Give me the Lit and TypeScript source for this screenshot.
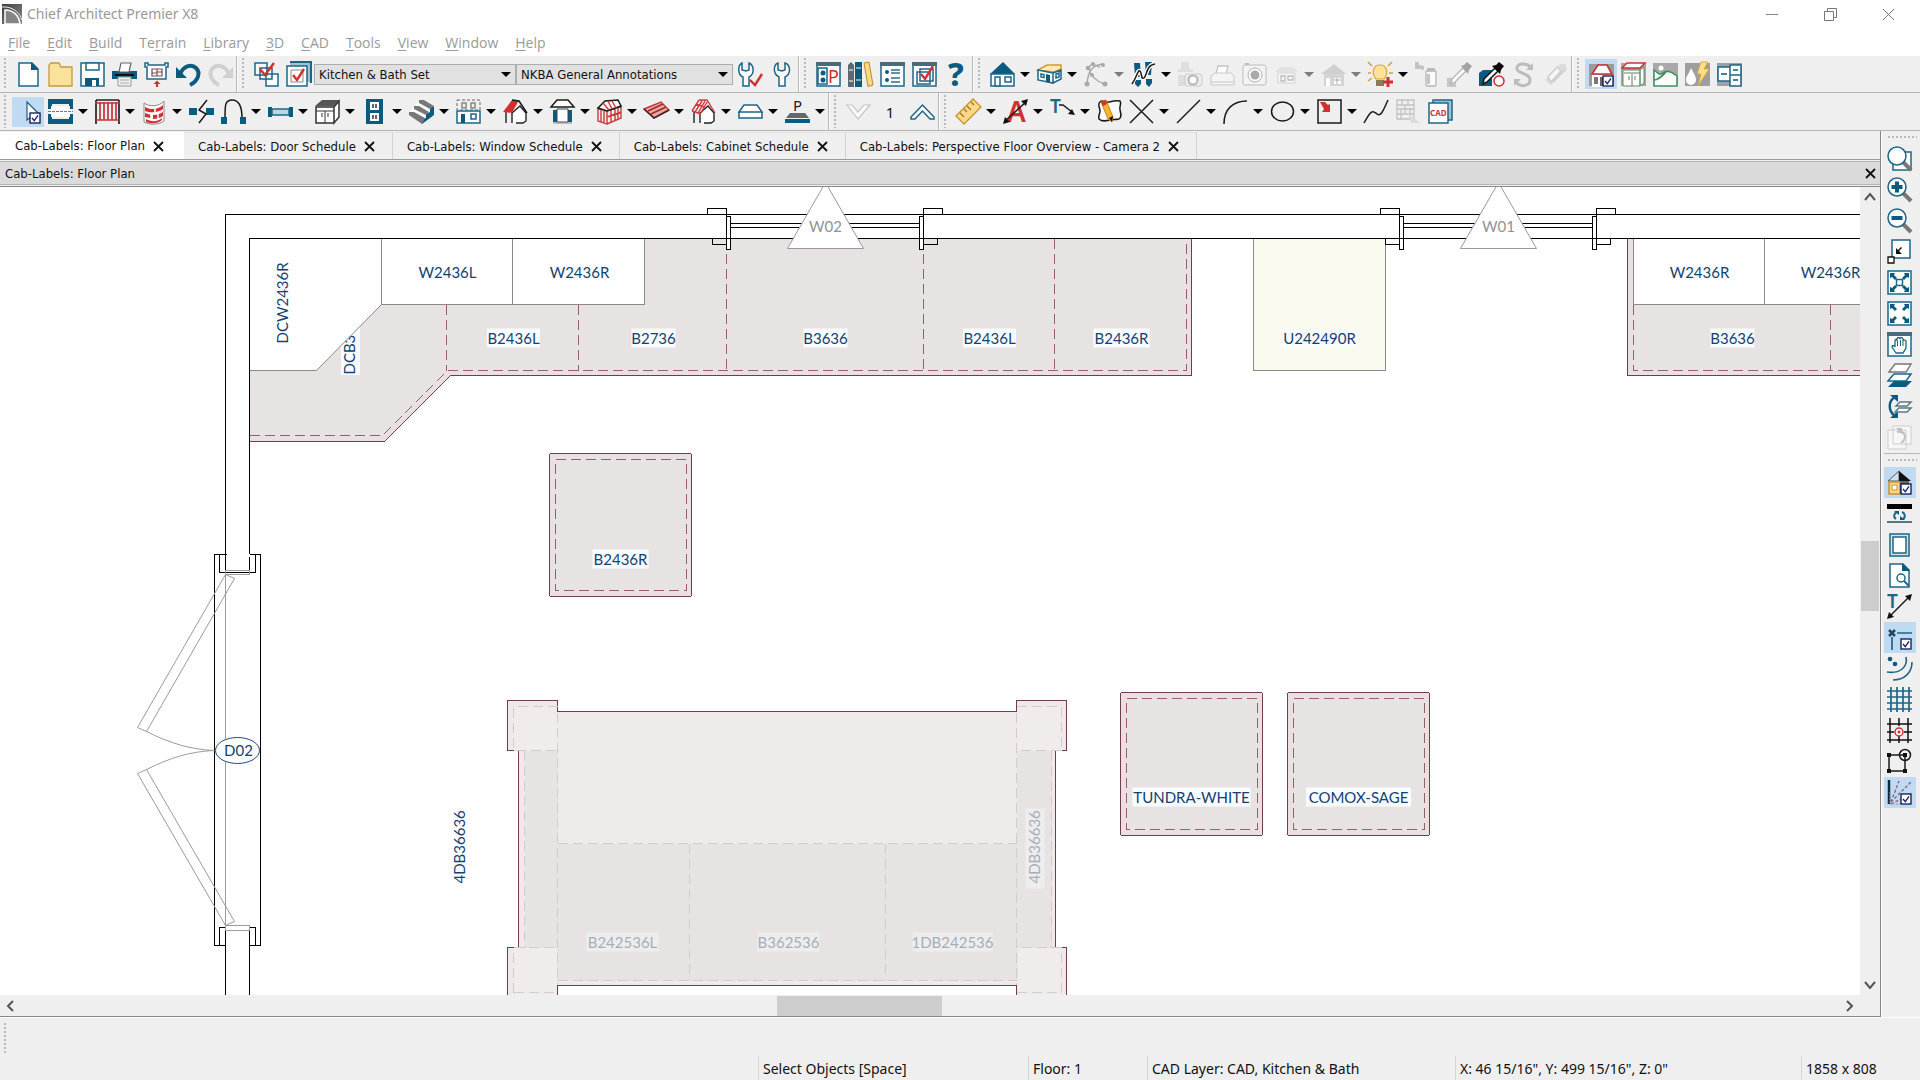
import { LitElement, html, svg, css, nothing, type TemplateResult, type SVGTemplateResult } from "lit";
import { customElement, state } from "lit/decorators.js";
import { classMap } from "lit/directives/class-map.js";

/* ---------- icon artwork, each on a 25 x 25 grid ---------- */

const tick = svg`<rect x="14" y="14" width="10" height="10" fill="#fff" stroke="#0a1450" stroke-width="1.3"/>
  <path d="M16 19l2.300 2.700L22 16.300" fill="none" stroke="#14206e" stroke-width="1.300"/>`;

const palette = svg`<rect x="1" y="1" width="23" height="23" fill="#fff" stroke="#1d6688" stroke-width="1.500"/>
  <rect x="0" y="0" width="25" height="4" fill="#4a6b7b"/>`;

const ICONS: Record<string, SVGTemplateResult> = {
  newFile: svg`<path class="to" d="M3 1h13l6 6v17H3z"/><path class="t" d="M15 0l8 8h-8z"/>`,
  open: svg`<path d="M1 24V3l2-2h8l2 4h11v19z" fill="#fbe29a" stroke="#c49a3c" stroke-width="1.300"/>`,
  save: svg`<path class="to" d="M1 1h23v23H1z"/><path class="to" d="M6 1h13v7H6z"/><path class="t" d="M5 16h14v8H5z"/><path d="M12 18h4v6h-4z" fill="#fff"/>`,
  print: svg`<path class="t" d="M0 9h25v8H0z"/><path d="M7 10L9 1h10l-2 9z" fill="#fff" stroke="#666" stroke-width="1.200"/><path d="M3 13h19" stroke="#111" stroke-width="2"/><path d="M6 15h13v9H6z" fill="#eee" stroke="#999"/><path d="M8 18h9M8 21h9" stroke="#aaa"/>`,
  layout: svg`<path class="to" d="M1 1h3v2h17V1h3v4h-2v12H3V5H1z"/><path d="M8 7h10v7H8zM8 11h5M13 7v7M13 10h5" fill="none" stroke="#7a4a50" stroke-width="1.200"/><path class="rf" d="M9.500 22L13 18.500l3.500 3.500H14v3h-2v-3z"/>`,
  undo: svg`<path d="M4 12C8 3 16 2 20 6c5 5 2 13-6 17" fill="none" stroke="#0b5a80" stroke-width="4"/><path class="t" d="M0 5v11h11z"/>`,
  redo: svg`<path d="M21 12C17 3 9 2 5 6c-5 5-2 13 6 17" fill="none" stroke="#d0d0d0" stroke-width="4"/><path d="M25 5v11H14z" fill="#d0d0d0"/>`,
  activeDefaults: svg`<path class="to" d="M1 1h12v12H1zM12 12h12v12H12zM6 6h12v11H6z"/><path class="rl3" d="M6 7l5 6L20 1"/>`,
  displaySets: svg`<path d="M4 0h21v21" fill="none" stroke="#1d6688" stroke-width="2"/><path d="M4 1h20v19H4z" fill="#9cc4d4"/><path class="to" d="M1 4h20v20H1z"/><path d="M5 8h12v12H5z" fill="#fff" stroke="#888"/><path class="rl3" d="M7 13l4 5 7-11"/>`,
  wrenchTick: svg`<path class="to" d="M5 24V15C-1 12 0 3 4 1v7l4 1 3-1V1c5 2 6 11 0 14v9z"/><path class="rl3" d="M12 18l5 5 7-11"/>`,
  wrench: svg`<path class="to" d="M9 24V15C3 12 3 3 8 1v7l4 1 3-1V1c6 2 6 11 0 14v9z"/>`,
  project: svg`${palette}<rect class="to" x="2" y="6" width="9" height="16"/><circle class="t" cx="7" cy="11" r="2.500"/><circle class="t" cx="7" cy="18" r="2.500"/><text x="12" y="21" font-size="18" fill="#d32f2f">P</text>`,
  library: svg`<path d="M0 3l3-3 3 3v22H0z" fill="#5f6a70"/><path class="t" d="M7 0h7v25H7z"/><path d="M1 8h4M1 19h4M8 6h5M8 18h5" stroke="#fff"/><path d="M16 1l5-1 4 23-5 1.500z" fill="#f7d98c" stroke="#c08a20"/>`,
  objectList: svg`${palette}<circle class="t" cx="7" cy="10" r="2"/><circle class="t" cx="7" cy="18" r="2"/><path d="M11 8h9M11 11h9M11 16h9M11 20h9" stroke="#2a7090" stroke-width="1.300"/>`,
  planCheck: svg`${palette}<path class="to" d="M8 7h13v12H8zM5 10h13v12H5z"/><path class="rl3" d="M9 12l4 5 8-13"/>`,
  help: svg`<text x="4" y="24" font-size="32" font-weight="800" fill="#0b5a80">?</text>`,
  camera: svg`<path class="t" d="M0 12L13 0l12 12z"/><path class="to" d="M1 12h23v12H1z"/><path class="to" d="M5 15h5v9H5zM15 15h6v5h-6z"/>`,
  dollhouse: svg`<path d="M1 8l9-5h14v4l-7 3z" fill="#fbe9c0" stroke="#d79a2a" stroke-width="1.500"/><path class="to" d="M1 8l15 3v10L1 18zM16 11l8-3v9l-8 4z"/><path class="to" d="M4 12l3 .6v3L4 15zM19 12l3-1v4l-3 1z"/><path class="t" d="M9 12l4 1v8l-4-1z"/>`,
  walk: svg`<path class="gl" d="M5 6C6 12 10 18 20 22M19 2C9 3 4 8 3 22M3 7l5-5 8 3"/><circle cx="4" cy="6" r="2.300" fill="#a8a8a8"/><circle cx="9" cy="2" r="2" fill="#a8a8a8"/><circle cx="19" cy="3" r="2" fill="#a8a8a8"/><circle cx="8" cy="13" r="2" fill="#a8a8a8"/><circle cx="3" cy="22" r="2.500" fill="#a8a8a8"/><circle cx="21" cy="22" r="2.500" fill="#a8a8a8"/>`,
  footsteps: svg`<path class="t" d="M3 1h6l1 14H4zM4 18h6v4l-3 3-3-3zM14 0h7l-1 13h-5zM15 17h6v4l-3 4-3-3z"/><path d="M1 21C6 14 7 7 9 9s1 9 4 7 2-13 11-14" fill="none" stroke="#fff" stroke-width="4"/><path class="k" d="M1 22C6 15 7 7 9 9s1 9 4 7 2-13 11-14"/>`,
  person: svg`<path d="M3 0h8v7h4v3H0V7h3zM0 13h9v11H0z" fill="#dedede"/><rect x="7" y="12" width="17" height="12" rx="2" fill="#ececec" stroke="#ccc"/><circle cx="15" cy="18" r="4.500" fill="#fff" stroke="#b5b5b5" stroke-width="2"/>`,
  printGrey: svg`<path d="M6 12l2-8h10l-2 8" fill="#fff" stroke="#c5c5c5" stroke-width="1.300"/><path d="M1 14l4-3h16l3 3v9H1z" fill="#f4f4f4" stroke="#c8c8c8"/><path d="M1 20h23" stroke="#c8c8c8"/>`,
  photo: svg`<rect x="1" y="3" width="23" height="20" rx="2" fill="#f3f3f3" stroke="#bdbdbd"/><circle cx="13" cy="13" r="7" fill="#fff" stroke="#b0b0b0"/><circle cx="13" cy="13" r="4.500" fill="#a9a9a9"/><path d="M3 3V1h4v2" fill="#bdbdbd"/>`,
  elevGrey: svg`<path d="M1 10l5-5h13l5 5z" fill="#e2e2e2"/><path d="M4 11h17v10H4z" fill="#f6f6f6" stroke="#d0d0d0"/><path d="M7 14h4v5H7zM14 14h5v4h-5z" fill="none" stroke="#bcbcbc" stroke-width="1.300"/>`,
  homeGrey: svg`<path d="M0 12L13 2l12 10z" fill="#cfcfcf"/><path d="M3 12h20v12H3z" fill="#d4d4d4"/><path d="M5 16h4v8H5zM13 16h7v6h-7z" fill="#fff"/><path d="M13 18h7M16 16v6" stroke="#aaa"/>`,
  light: svg`<path d="M8 17C3 11 5 3 12 3s9 8 4 14z" fill="#fbe39c" stroke="#d9a43c" stroke-width="1.200"/><path d="M8 18h8v6H8z" fill="#8d7a5a"/><path d="M0 0l4 4M24 0l-4 4M0 11h3M21 11h4M0 19l4-3" stroke="#d99a3c" stroke-width="1.500"/><path d="M20 15v10M15 20h10" stroke="#d32f2f" stroke-width="3"/>`,
  spray: svg`<path d="M0 2l9 2v4L0 6zM0 0h4v7H0z" fill="#c4c4c4"/><path d="M12 6h8v4h-8z" fill="#bbb"/><rect x="11" y="9" width="10" height="15" rx="1" fill="#fafafa" stroke="#b5b5b5" stroke-width="1.300"/><path d="M12 12h3v10h-3z" fill="#c5c5c5"/>`,
  dropper: svg`<path d="M0 16h9v9H0z" fill="#c6c6c6"/><path d="M4 22l1-5L16 6l3 3L8 20z" fill="#fff" stroke="#b3b3b3" stroke-width="1.300"/><path d="M14 4l3-1 3-3 5 4-3 4-1 4z" fill="#a3a3a3"/>`,
  dropperMaterial: svg`<path class="t" d="M0 11l4-3h9v16H0z"/><circle cx="20" cy="19" r="5" fill="#fff" stroke="#d32f2f" stroke-width="1.500"/><path d="M4 22l1-5L16 6l3 3L8 20z" fill="#fff" stroke="#111" stroke-width="1.500"/><path d="M13 4l4-1 3-3 5 4-3 4-1 4z" fill="#0a0a0a"/>`,
  swap: svg`<path d="M20 6C16 0 5 1 6 7c1 5 13 4 13 11 0 6-10 8-14 2" fill="none" stroke="#bcbcbc" stroke-width="3"/><path d="M22 1v7h-7zM3 24v-7h7z" fill="#bcbcbc"/>`,
  pads: svg`<path d="M2 18L17 2h6v5L8 23z" fill="#dcdcdc"/><path d="M5 15l9-10 4 4L8 20zM10 20L23 7" fill="#f6f6f6" stroke="#cecece" stroke-width="1.500"/>`,
  houseOn: svg`<path d="M0 2h25v22H0z" fill="#9b9b9b"/><path d="M3 12L9 3h9l5 9z" fill="#fff" stroke="#c5343a" stroke-width="1.700"/><path d="M3 13h20v12H3z" fill="#fff"/><path d="M5 15h4v7H5z" fill="#777"/><path d="M11 15h4v9h-4z" fill="#666"/>${tick}`,
  cabinetRed: svg`<path d="M0 1h25v23H0z" fill="#a5a5a5"/><path d="M1 6l5-5h18l-5 5z" fill="#fff" stroke="#c5343a" stroke-width="1.500"/><path d="M2 8h17v16H2zM19 8l4-3v16l-4 3z" fill="#fff" stroke="#5d8f6a"/><path d="M11 12v12M3 11h16M8 14v4M14 14v4" stroke="#5d7a6a"/>`,
  terrain: svg`<path d="M0 1h25v23H0z" fill="#a9a9a9"/><circle cx="8" cy="6" r="2.500" fill="#fff"/><path d="M1 24V8l5 4 3 0c4-5 10-2 15 2v10zM1 18c6 0 10-6 13-9" fill="#fff" stroke="#3f9160" stroke-width="1.500"/>`,
  weather: svg`<path d="M0 1h25v23H0z" fill="#9e9e9e"/><path d="M6 6c3 6 5 8 5 12a5 5 0 0 1-10 0c0-4 3-6 5-12z" fill="#fff"/><path d="M16 0h7l-4 7h5L13 24l3-12h-4z" fill="#fbe08c" stroke="#dfa93a"/>`,
  schedule: svg`<path d="M0 1h25v23H0z" fill="#9aa3a8"/><path class="to" d="M1 5h12v14H1zM13 3h11v10H13zM13 13h11v11H13z"/><path d="M4 12h6M16 8h5M16 18h5" stroke="#0b5a80" stroke-width="1.700"/>`,

  select: svg`<path d="M11 3v18l5-4 4 0 4-1z" fill="#fff" stroke="#1d5a80" stroke-width="1.200"/>${tick}`,
  wall: svg`<path class="t" d="M0 0h25v9h-4V5H4v4H0zM0 16h4v4h17v-4h4v9H0z"/><path d="M2 7h21v11H2z" fill="#fff"/><path class="t" d="M0 0h3v10H0zM22 0h3v10h-3zM0 15h3v10H0zM22 15h3v10h-3z"/><path d="M0 12.500h25" stroke="#777" stroke-dasharray="3 1"/>`,
  railing: svg`<path d="M1 1v24M24 1v24M1 1h23" stroke="#222" stroke-width="1.700"/><path d="M0 4h25M1 21h24M5 3v18M9 3v18M13 3v18M17 3v18M21 3v18" stroke="#c5343a" stroke-width="1.700"/>`,
  curvedWall: svg`<path d="M2 4c5 4 15 4 20-2v20c-5 4-15 4-20 1z" fill="#fff" stroke="#888"/><path class="rf" d="M3 8c5 3 13 3 18-2v4c-5 4-13 4-18 2zM3 14l6 2v3l-6-1zM11 16c4 0 7-1 10-3v4c-3 2-6 3-10 3zM4 20c5 3 12 3 16-1v2c-4 4-11 4-16 2z"/><path d="M13 8v5M9 15v5M16 14v6" stroke="#fff" stroke-width="1.500"/>`,
  breakWall: svg`<path class="t" d="M0 9h8v7H0zM17 9h8v7h-8z"/><path class="k" d="M18 1l-8 10 7 4-7 9"/>`,
  spline: svg`<path class="k" d="M4 19C4 6 4 1 11 1s10 6 10 18"/><path class="t" d="M0 18h6v7H0zM19 18h6v7h-6z"/>`,
  windowTool: svg`<path class="t" d="M0 8h4v10H0zM21 8h4v10h-4z"/><path d="M4 10h17v6H4z" fill="#bcd6e0" stroke="#1d6688" stroke-width="1.500"/>`,
  cabinet: svg`<path d="M0 7l7-6h18l-6 6z" fill="#555"/><path d="M1 8h18v16H1zM19 8l5-6v16l-5 6z" fill="#fff" stroke="#333" stroke-width="1.500"/><path d="M10 12v12M1 12h18M7 14v4M13 14v4" stroke="#333"/>`,
  outlet: svg`<rect class="t" x="4" y="0" width="17" height="25"/><path d="M8 3h9v8H8zM8 14h9v8H8z" fill="#fff"/><path d="M11 5v4M14 5v4M11 16v4M14 16v4" stroke="#333" stroke-width="1.500"/>`,
  stairs: svg`<path d="M11 1h5l9 6-12 17L0 14z" fill="#fff"/><path class="t" d="M13 25v-5l4-1v-4l4-2V9l4-2v9z"/><path d="M10 1h5l10 6-4 3L10 4zM5 7h5l10 6-3 3L5 10zM0 13h5l11 6-3 6L0 16z" fill="#777"/>`,
  elevation: svg`<path d="M1 1h23v10H1z" fill="none" stroke="#666" stroke-dasharray="3 2"/><path d="M6 4h4v5H6zM15 4h4v5h-4z" fill="none" stroke="#888" stroke-width="1.500"/><path class="to" d="M1 12h23v12H1z"/><path class="t" d="M5 15h4v9H5z"/><path class="to" d="M15 15h5v5h-5z"/>`,
  roofRed: svg`<path d="M3 12v12M9 24V14l8-7 6 7v8l-3 2h-7" fill="#fff" stroke="#222" stroke-width="1.400"/><path class="rf" d="M0 13L9 1h7L9 14z"/><path d="M9 1l7 1 8 12" class="k"/>`,
  gazebo: svg`<path class="kw" d="M1 8l6-7h11l6 7z"/><path class="t" d="M3 11h4v12H3zM18 11h4v12h-4z"/><path d="M7 10h11v13H7z" fill="#fff" stroke="#444"/><path d="M3 24h19" stroke="#888"/>`,
  framing: svg`<path class="rl" d="M1 9v13l9 3V12zM10 12l14-5v12l-14 6M4 11v12M7 12v12M14 11v12M18 9v12M21 8v12M10 18l14-5"/><path class="kw" d="M1 9L8 2l13-1 3 6-14 5z"/><path class="rl" d="M6 4l6 7M11 2l4 8M15 2l4 7"/>`,
  deck: svg`<path d="M0 10L17 3l8 8-15 8z" fill="#e9a9a6" stroke="#c5343a" stroke-width="1.400"/><path d="M4 12l15-7M7 15l15-7" stroke="#a02828" stroke-width="1.400"/><path d="M0 10l10 9 15-8" fill="none" stroke="#422" stroke-width="1.600"/>`,
  rafters: svg`<path d="M3 12v12M9 24V14l8-7 6 7v8l-3 2h-7" fill="#fff" stroke="#222" stroke-width="1.400"/><path class="rl" d="M1 12L8 1M4 13l7-11M7 14l7-12M10 14l6-11M1 12l9 3M5 5l8 3M8 1h8l8 13"/>`,
  slab: svg`<path class="to" d="M1 13L6 6h13l5 7zM1 13h23v6H1z"/>`,
  pad: svg`<text x="8" y="12" font-size="15" fill="#222">P</text><path d="M5 14h15l4 5H1z" fill="#666"/><path class="t" d="M0 20h25v4H0z"/>`,
  down: svg`<path d="M1 6h5l6 7 6-7h6L12 20z" fill="#fbfbfb" stroke="#c6c6c6" stroke-width="1.200"/>`,
  up: svg`<path class="to" d="M1 18L12.500 6 24 18v2h-4l-7.500-8L5 20H1z"/>`,
  measure: svg`<path d="M0 17L17 0l8 8L8 25z" fill="#fbd98a" stroke="#c8922c" stroke-width="1.300"/><path d="M4 14l4 4M8 10l3 3M11 7l4 4M15 3l3 3" stroke="#a8741c" stroke-width="1.300"/>`,
  textTool: svg`<text x="4" y="23" font-size="28" font-weight="600" fill="#d32f2f">A</text><path class="k" d="M2 22L23 3"/><path d="M25 0l-2 7-5-5zM0 25l2-7 5 5z" fill="#111"/>`,
  leader: svg`<text x="0" y="14" font-size="19" font-weight="600" fill="#1d6688">T</text><path class="k" d="M9 6h4l9 7"/><path d="M25 16l-7-1 4-5z" fill="#111"/>`,
  revision: svg`<path class="kw" d="M3 3c3-3 5 1 9 0s8-2 11-1c2 3-1 5 0 9s2 7-1 9c-5 1-5 0-9 1s-8 2-11-1c-1-4 1-5 1-8S0 5 3 3z"/><path d="M4 3l5-2 7 17-1 5-4-3z" fill="#f4b52f" stroke="#c9861d"/><path class="rf" d="M4 3l5-2 1 4-4 2z"/><path d="M12 19l4-2-1 6z" fill="#111"/>`,
  cross: svg`<path class="k" d="M1 1l23 23M24 1L1 24"/>`,
  line: svg`<path class="k" d="M24 1L1 24"/>`,
  arc: svg`<path class="k" d="M1 25C1 10 10 2 24 2"/>`,
  circle: svg`<ellipse class="k" cx="12.500" cy="12.500" rx="11" ry="9.500"/>`,
  box: svg`<path class="k" d="M1 1h23v23H1z"/><path class="rf" d="M3 3h5l3 3 2-1v8H5l2-3z"/>`,
  curve: svg`<path class="k" d="M0 24C8 9 9 12 13 15s6-3 11-14"/>`,
  wallGrey: svg`<path d="M1 1h17v19H1zM1 6h17M1 10h17M1 15h17M6 1v5M12 1v5M9 6v9M5 10v10M14 10v10" fill="none" stroke="#c2c2c2" stroke-width="1.300"/><path d="M12 14l12 10h-9z" fill="#dcdcdc"/>`,
  cad: svg`<path d="M5 1h19v20H5z" fill="#9cc4d4" stroke="#1d6688" stroke-width="1.500"/><rect class="to" x="1" y="4" width="19" height="20"/><text x="2" y="17" font-size="8" font-weight="700" fill="#d32f2f">CAD</text>`,

  zoomArea: svg`<path class="to" d="M6 6h18v18H6z"/><path d="M15 15l9 9" stroke="#777" stroke-width="4"/><circle class="to" cx="10" cy="10" r="9"/>`,
  zoomIn: svg`<path d="M15 15l9 9" stroke="#777" stroke-width="4"/><circle class="to" cx="10" cy="10" r="9"/><path d="M10 4.500v11M4.500 10h11" stroke="#0b5a80" stroke-width="4"/>`,
  zoomOut: svg`<path d="M15 15l9 9" stroke="#777" stroke-width="4"/><circle class="to" cx="10" cy="10" r="9"/><path d="M4.500 10h11" stroke="#0b5a80" stroke-width="4"/>`,
  undoZoom: svg`<path class="to" d="M5 1h18v18H5z"/><path d="M1 18h6v6H1z" fill="#fff" stroke="#111" stroke-width="1.300"/><path d="M9 15V9l2 2 3-3 1 1-3 3 3 3z" fill="#111"/>`,
  fillWindow: svg`<path class="to" d="M1 1h23v23H1zM9.500 9.500h6v6h-6z"/><path class="t" d="M3 3h5L7 5l3 3-2 2-3-3-2 1zM22 3h-5l1 2-3 3 2 2 3-3 2 1zM3 22h5l-1-2 3-3-2-2-3 3-2-1zM22 22h-5l1-2-3-3 2-2 3 3 2-1z"/>`,
  fillBuilding: svg`<path class="to" d="M1 1h23v23H1z"/><path class="t" d="M3 3h5L7 5l3 3-2 2-3-3-2 1zM22 3h-5l1 2-3 3 2 2 3-3 2 1zM3 22h5l-1-2 3-3-2-2-3 3-2-1zM22 22h-5l1-2-3-3 2-2 3 3 2-1z"/>`,
  pan: svg`${palette}<path d="M9 21l-4-6c0-2 2-2 3 0V9c0-2 2-2 2 0V7c0-2 2-2 3 0 0-2 2-2 3 0v2c0-2 2-1 3 0v7l-3 5z" fill="#fff" stroke="#1d6688" stroke-width="1.300"/><path d="M10.500 9v5M13.500 8v6M16 9v5" stroke="#1d6688"/>`,
  layers: svg`<path class="t" d="M1 24l6-6h18l-6 6z"/><path class="to" d="M1 18l6-7h17l-5 7z"/><path d="M2 9l6-8h16l-5 8z" fill="#fff" stroke="#777" stroke-width="1.400"/>`,
  layerRotate: svg`<path d="M8 3c-7 4-7 14 0 19" fill="none" stroke="#0b5a80" stroke-width="2.500"/><path class="t" d="M3 1h8v7zM3 24h8v-7z"/><path d="M9 12l4-4h11l-4 4zM8 18l4-4h12l-4 4z" fill="#fff" stroke="#5d7885" stroke-width="1.500"/>`,
  rotateGrey: svg`<path d="M1 5h18v19H1zM6 1h18v18H6z" fill="#f7f7f7" stroke="#cdcdcd"/><path d="M10 7c8-2 11 6 4 11" fill="none" stroke="#c4bfc6" stroke-width="2"/><path d="M9 3h6v6z" fill="#c4bfc6"/>`,
  houseColor: svg`<path d="M1 11L12 1v10z" fill="#cfe4ee" stroke="#555"/><path d="M12 1l12 10H12z" fill="#111"/><path d="M2 12h11v12H2z" fill="#fbd98a" stroke="#c8922c" stroke-width="1.500"/><path d="M5 15h5v5H5z" fill="#fff" stroke="#c8922c"/><path d="M13 11h9v13h-9z" fill="#666"/>${tick}`,
  weights: svg`<path d="M0 3h25v5H0z" fill="#000"/><path d="M0 21h25" stroke="#1d5060" stroke-width="1.500"/><path d="M9 18c-3-2-2-6 1-7M15 11c3 1 4 5 1 7" fill="none" stroke="#1d6688" stroke-width="2"/><path class="t" d="M7 10h5v4zM18 19h-5v-4z"/>`,
  sheet: svg`<path d="M3 2h19v22H3z" fill="#d4e4eb" stroke="#1d6688" stroke-width="1.500"/><path class="to" d="M6 5h13v16H6z"/>`,
  preview: svg`<path class="to" d="M3 1h13l6 6v17H3z"/><path class="t" d="M15 0l8 8h-8z"/><circle cx="14" cy="15" r="4" fill="#fff" stroke="#1d6688" stroke-width="1.500"/><path d="M17 18l5 5" stroke="#1d6688" stroke-width="2"/>`,
  dimension: svg`<text x="0" y="14" font-size="19" font-weight="600" fill="#1d6688">T</text><path class="k" d="M2 23L23 2"/><path d="M25 0l-2 7-5-5zM0 25l2-7 5 5z" fill="#111"/>`,
  snapLine: svg`<path d="M5 12v13M10 8h15" stroke="#1d6688" stroke-width="1.700"/><path d="M2 5l6 6M8 5l-6 6" stroke="#1d4a60" stroke-width="2.500"/>${tick}`,
  arcCentre: svg`<circle class="t" cx="3" cy="3" r="2.300"/><circle class="t" cx="8" cy="8" r="2.300"/><path d="M19 1C21 11 13 18 0 16M25 6c0 11-8 18-19 18" fill="none" stroke="#1d6688" stroke-width="1.600"/>`,
  grid: svg`<path d="M4 0v25M10 0v25M16 0v25M22 0v25M0 4h25M0 10h25M0 16h25M0 22h25" stroke="#1d6688" stroke-width="1.700"/>`,
  gridSnap: svg`<path d="M3 0v25M12 0v8M12 18v7M21 0v25M0 6h25M0 14h7M17 14h8M0 22h25" stroke="#111" stroke-width="1.500"/><circle cx="12" cy="14" r="4" fill="#fff" stroke="#d32f2f" stroke-width="1.500"/><circle class="rf" cx="12" cy="14" r="1.500"/>`,
  objectSnap: svg`<path class="k" d="M2 6h16v16H2z"/><path d="M0 4h4v4H0zM0 20h4v4H0zM16 20h4v4h-4zM16 4h4v4h-4z" fill="#111"/><circle class="k" cx="18" cy="6" r="5.500"/>`,
  angleSnap: svg`<path d="M2 0v24" stroke="#0a2a40" stroke-width="2.500"/><path d="M4 22L12 1M4 22L25 1M4 24l20-10" stroke="#8a5a78" stroke-width="1.300" stroke-dasharray="3 2"/><path d="M3 12v12h10" fill="none" stroke="#99a" stroke-dasharray="2 1"/>${tick}`,
};

interface Tool { icon: string; label: string; menu?: boolean; on?: boolean; off?: boolean; }
const t = (icon: string, label: string, flags = ""): Tool => ({
  icon, label, menu: flags.includes("m"), on: flags.includes("on"), off: flags.includes("x"),
});

const FILE_TOOLS = [t("newFile", "New Plan"), t("open", "Open Plan"), t("save", "Save"), t("print", "Print"),
  t("layout", "Send to Layout"), t("undo", "Undo"), t("redo", "Redo", "x")];
const SET_TOOLS = [t("activeDefaults", "Active Defaults"), t("displaySets", "Layer Display Options")];
const WRENCH_TOOLS = [t("wrenchTick", "Default Settings"), t("wrench", "Preferences")];
const BROWSER_TOOLS = [t("project", "Project Browser"), t("library", "Library Browser"), t("objectList", "Materials List"),
  t("planCheck", "Plan Check"), t("help", "Help")];
const VIEW_TOOLS = [t("camera", "Camera", "m"), t("dollhouse", "Overview", "m"), t("walk", "Walkthrough", "mx"),
  t("footsteps", "Walkthrough Path", "m"), t("person", "Record", "x"), t("printGrey", "Print Image", "x"),
  t("photo", "Picture", "x"), t("elevGrey", "Cross Section", "mx"), t("homeGrey", "Orthographic", "mx"),
  t("light", "Add Lights", "m"), t("spray", "Material Painter", "x"), t("dropper", "Eyedropper", "x"),
  t("dropperMaterial", "Object Painter"), t("swap", "Swap", "x"), t("pads", "Adjust Material", "x")];
const MODE_TOOLS = [t("houseOn", "House Tools", "on"), t("cabinetRed", "Cabinet Tools"), t("terrain", "Terrain Tools"),
  t("weather", "Electrical Tools"), t("schedule", "Schedule Tools")];
const BUILD_TOOLS = [t("select", "Select Objects", "on"), t("wall", "Walls", "m"), t("railing", "Railings", "m"),
  t("curvedWall", "Curved Walls", "m"), t("breakWall", "Break Wall"), t("spline", "Doors", "m"), t("windowTool", "Windows", "m"),
  t("cabinet", "Cabinets", "m"), t("outlet", "Electrical", "m"), t("stairs", "Stairs", "m"), t("elevation", "Floors", "m"),
  t("roofRed", "Roof", "m"), t("gazebo", "Rooms", "m"), t("framing", "Framing", "m"), t("deck", "Decks", "m"),
  t("rafters", "Rafters", "m"), t("slab", "Slabs", "m"), t("pad", "Terrain", "m")];
const CAD_TOOLS = [t("measure", "Dimensions", "m"), t("textTool", "Text", "m"), t("leader", "Leader Line", "m"),
  t("revision", "Revision Cloud"), t("cross", "Points", "m"), t("line", "Lines", "m"), t("arc", "Arcs", "m"),
  t("circle", "Circles", "m"), t("box", "Boxes", "m"), t("curve", "Spline"), t("wallGrey", "Edit Region", "x"),
  t("cad", "CAD Detail Management")];
const ZOOM_TOOLS = [t("zoomArea", "Zoom"), t("zoomIn", "Zoom In"), t("zoomOut", "Zoom Out"), t("undoZoom", "Undo Zoom"),
  t("fillWindow", "Fill Window"), t("fillBuilding", "Fill Window Building Only"), t("pan", "Pan Window"),
  t("layers", "Layer Set"), t("layerRotate", "Swap Layers"), t("rotateGrey", "Rotate View", "x")];
const TOGGLE_TOOLS = [t("houseColor", "Color", "on"), t("weights", "Line Weights"), t("sheet", "Drawing Sheet"),
  t("preview", "Print Preview"), t("dimension", "Temporary Dimensions"), t("snapLine", "Extension Snaps", "on"),
  t("arcCentre", "Arc Centers"), t("grid", "Reference Grid"), t("gridSnap", "Grid Snaps"), t("objectSnap", "Object Snaps"),
  t("angleSnap", "Angle Snaps", "on")];

const closeMark = svg`<path d="M1 1l9 9M10 1l-9 9" fill="none" stroke="#111" stroke-width="1.800"/>`;

/* ---------- the drawing ---------- */

@customElement("floor-plan")
export class FloorPlan extends LitElement {
  static styles = css`
    :host { display: block; background: #fff; }
    svg { display: block; width: 100%; height: 100%; }
    text { font: 15px Lato, "Open Sans", sans-serif; fill: #153f72; text-anchor: middle; }
    .start { text-anchor: start; }
    .wall, .gap { stroke: #000; fill: #fff; }
    .ink { stroke: #000; fill: none; }
    .thin { stroke: #8a8a8a; fill: #fff; }
    .leaf { stroke: #9c9c9c; fill: none; }
    .tag { stroke: #9a9a9a; fill: #fff; }
    .top { stroke: #6e3f4b; fill: #ecdfe1; }
    .body { fill: #e8e3e3; }
    .dash { stroke: #94606c; fill: none; stroke-dasharray: 10 5; }
    .fridge { stroke: #8a8a8a; fill: #fbfaee; }
    .plate { fill: #f8fcff; }
    .grey { fill: #929292; }
    .faint { fill: #a7adb8; }
    .faintPlate { fill: #eeeded; }
    .island { stroke: #6e3f4b; fill: #f1e9e9; }
    .islandBody { fill: #e7e3e3; }
    .counter { fill: #eeeaea; }
    .post { fill: #efeceb; }
    .faintDash { stroke: #d2cdcd; fill: none; stroke-dasharray: 10 5; }
    .bubble { stroke: #1f4a80; fill: #fff; }
    .crisp { shape-rendering: crispEdges; }
  `;

  private label(x: number, y: number, text: string, width = 0, tone = "", plate = "plate") {
    return svg`${width ? svg`<rect class=${plate} x=${x - width / 2} y=${y - 15} width=${width} height="19"/>` : nothing}
      <text class=${tone} x=${x} y=${y}>${text}</text>`;
  }

  private upright(x: number, y: number, text: string, tone = "") {
    return svg`<text class="start ${tone}" transform="translate(${x} ${y}) rotate(-90)">${text}</text>`;
  }

  private window(left: number, right: number, name: string) {
    const mid = Math.round((left + right) / 2);
    return svg`<g class="crisp ink">
        <path class="gap" d="M${left} 214H${right}V238H${left}z"/>
        <path d="M${left + 4} 223H${right - 4}M${left + 4} 227H${right - 4}"/>
        <path d="M${left - 19} 214v-6h19v6M${right} 214v-6h19v6M${left - 14} 238v6h17M${right + 14} 238v6h-17"/>
        <path class="gap" d="M${left} 216h4v33h-4zM${right - 4} 216h4v33h-4z"/>
        <path d="M${left} 238h4M${right - 4} 238h4"/>
      </g>
      <path class="tag" d="M${mid} 182L${mid + 38} 248H${mid - 38}z"/>
      ${this.label(mid, 231, name, 0, "grey")}`;
  }

  private sample(x: number, y: number, name: string, width: number, baseline: number) {
    return svg`<g class="crisp"><rect class="top" x=${x} y=${y} width="142" height="143" rx="2"/>
      <rect class="body" x=${x + 6} y=${y + 6} width="131" height="131"/>
      <rect class="dash" x=${x + 6} y=${y + 6} width="131" height="131"/></g>
      ${this.label(x + 71, baseline, name, width)}`;
  }

  render() {
    return html`<svg role="img" aria-label="Kitchen floor plan"><g transform="translate(0.5 -186.5)">
      <g class="crisp">
        <path class="top" d="M249 238H1191V375H450L384 441H249z"/>
        <path class="body" d="M249 238H1186V370H447L382 435H249z"/>
        <path class="dash" d="M249 435H382L447 370H1186V238M446 304V370M578 304V370M726 238V370M923 238V370M1054 238V370"/>
        <path class="top" d="M1870 375H1627V238H1870"/>
        <path class="body" d="M1633 238H1870V370H1633z"/>
        <path class="dash" d="M1633 304V370H1870M1830 304V370"/>
        <path class="thin" d="M1633 238H1870V304H1633zM1764 238V304"/>
        <rect class="plate" x="340" y="320" width="19" height="54"/>
      </g>
      ${this.upright(354, 374, "DCB3")}
      <path class="thin" d="M249 238H381V304L316 370H249z"/>
      <path class="thin crisp" d="M381 238H644V304H381zM512 238V304"/>
      <rect class="fridge crisp" x="1253" y="238" width="132" height="132"/>

      <path class="wall crisp" d="M225 1100V214H1900V238H249V1100z"/>
      ${this.window(726, 923, "W02")}
      ${this.window(1399, 1596, "W01")}

      ${this.upright(287, 343, "DCW2436R")}
      ${this.label(447, 277, "W2436L")}
      ${this.label(579, 277, "W2436R")}
      ${this.label(1699, 277, "W2436R")}
      ${this.label(1830, 277, "W2436R")}
      ${this.label(513, 343, "B2436L", 53)}
      ${this.label(653, 343, "B2736", 44)}
      ${this.label(825, 343, "B3636", 44)}
      ${this.label(989, 343, "B2436L", 53)}
      ${this.label(1121, 343, "B2436R", 56)}
      ${this.label(1319, 343, "U242490R", 75)}
      ${this.label(1732, 343, "B3636", 44)}

      <g class="crisp">
        <rect class="gap" x="214" y="554" width="46" height="391"/>
        <path class="wall" d="M225 554V572H249V554"/>
        <path class="ink" d="M219 554V572H225M255 554V572H249M219 945V927H225M255 945V927H249"/>
        <path d="M226 553h23v3h-23zM226 944h23v3h-23z" fill="#fff"/>
        <path class="wall" d="M225 950V930H249V950"/>
        <path class="leaf" d="M225 570H249V574H225zM225 925H249V930H225zM225 574V925"/>
      </g>
      <path class="leaf" d="M225 574L234 578L146 731L137 727zM225 925L234 921L146 769L137 773z"/>
      <path class="leaf" d="M146 731C170 743 190 749 214 750C190 751 170 757 146 769"/>
      <ellipse class="bubble" cx="237" cy="750" rx="22" ry="13"/>
      ${this.label(238, 755, "D02")}
      ${this.upright(464, 883, "4DB36636")}

      ${this.sample(549, 453, "B2436R", 56, 564)}
      ${this.sample(1120, 692, "TUNDRA-WHITE", 118, 802)}
      ${this.sample(1287, 692, "COMOX-SAGE", 105, 802)}

      <g class="crisp">
        <path class="island" d="M507 700H557V711H1016V700H1066V750H1055V947H1066V1010H1016V985H557V1010H507V947H518V750H507z"/>
        <path class="islandBody" d="M524 750H1051V980H524z"/>
        <path class="counter" d="M557 712H1016V843H557z"/>
        <path class="post" d="M513 706H556V750H513zM1017 706H1061V750H1017zM513 947H556V998H513zM1017 947H1061V998H1017z"/>
        <path class="faintDash" d="M557 706H513V750H557M1016 706H1061V750H1016M524 750V947M1051 750V947M557 712V984M1016 712V984
          M557 843H1016M689 843V980M885 843V980M557 980H1016M513 992V947H557M1061 992V947H1016M513 992H557M1016 992H1061"/>
      </g>
      ${this.label(622, 947, "B242536L", 72, "faint", "faintPlate")}
      ${this.label(788, 947, "B362536", 62, "faint", "faintPlate")}
      ${this.label(952, 947, "1DB242536", 80, "faint", "faintPlate")}
      <rect class="faintPlate" x="1025" y="808" width="19" height="80"/>
      ${this.upright(1039, 883, "4DB36636", "faint")}
    </g></svg>`;
  }
}

/* ---------- the application window ---------- */

@customElement("app-root")
export class AppRoot extends LitElement {
  static styles = css`
    :host {
      display: flex; flex-direction: column; height: 100vh; overflow: hidden;
      background: #efefef; color: #111;
      font: 13px/20px "DejaVu Sans Condensed", "DejaVu Sans", "Noto Sans", sans-serif;
    }
    * { box-sizing: border-box; }
    button, select { font: inherit; color: inherit; margin: 0; padding: 0; border: 0; background: none; }
    svg { display: block; flex: none; }
    .titlebar { display: flex; align-items: center; height: 28px; padding-left: 2px; background: #fff;
      font: 14px/20px "Noto Sans", "Open Sans", sans-serif; color: #999; }
    .titlebar h1 { margin: 0 auto 0 5px; font: inherit; }
    .winbtn { width: 58px; height: 28px; display: grid; place-items: center; }
    .titlebar .winbtn:last-child { margin-right: 3px; }
    .menubar { display: flex; align-items: flex-start; gap: 17px; height: 28px; padding: 5px 8px 0; background: #fff;
      font: 14px/20px "Open Sans", "Noto Sans", sans-serif; color: #999; }
    .menubar u { text-underline-offset: 2px; }
    .toolbar { display: flex; align-items: center; height: 37px; border-bottom: 1px solid #b4b4b4; }
    .toolbar.build { height: 38px; }
    .group { display: flex; align-items: center; height: 100%; }
    .grip { width: 14px; height: 100%; padding: 2px 0 2px 5px; border-left: 1px solid #b8b8b8; box-shadow: inset 1px 0 #fbfbfb; }
    .group:first-child .grip { width: 12px; border-left: 0; padding-left: 4px; box-shadow: none; }
    .grip::before { content: ""; display: block; width: 2px; height: 100%;
      background: repeating-linear-gradient(#b9b9b9 0 2px, transparent 2px 4px); }
    .tool { display: flex; align-items: center; width: 32px; height: 30px; padding-left: 4px; }
    .tool.menu { width: 47px; }
    .tool.on { background: #bfdaf1; }
    .caret { margin-left: 5px; fill: #000; }
    .off .caret { fill: #7d7d7d; }
    .floor { width: 32px; text-align: center; font: 15px/20px "Noto Sans", sans-serif; }
    .pick { display: grid; align-items: center; }
    .pick > * { grid-area: 1 / 1; }
    .pick select { appearance: none; width: 100%; height: 21px; padding: 0 20px 0 4px; line-height: 19px;
      background: #e1e1e1; border: 1px solid #adadad; border-radius: 0; }
    .pick svg { justify-self: end; margin-right: 5px; pointer-events: none; }
    .set { width: 202px; }
    .defaults { width: 217px; margin-right: 1px; }
    .icon { overflow: visible; }
    .icon text { font-family: "Noto Sans", sans-serif; }
    .t { fill: #0b5a80; }
    .to { fill: #fff; stroke: #1d6688; stroke-width: 1.5; }
    .k { fill: none; stroke: #1a1a1a; stroke-width: 1.5; }
    .kw { fill: #fafafa; stroke: #1a1a1a; stroke-width: 1.5; }
    .rl { fill: none; stroke: #cf3a3a; stroke-width: 1.4; }
    .rl3 { fill: none; stroke: #d32f2f; stroke-width: 2.4; }
    .rf { fill: #d32f2f; }
    .gl { fill: none; stroke: #a8a8a8; stroke-width: 1.5; }

    .work { flex: 1; min-height: 0; display: flex; }
    .main { flex: 1; min-width: 0; display: flex; flex-direction: column; border-right: 1px solid #858585; }
    .tabs { display: flex; height: 29px; padding-top: 1px; border-bottom: 1px solid #9a9a9a; }
    .tab { display: flex; align-items: center; height: 27px; padding: 1px 17px 0 14px; gap: 8px; border-right: 1px solid #d4d4d4; border-top: 1px solid #e2e2e2; }
    .tab.current { background: #fff; padding: 0 19px 0 15px; border-color: #fff; }
    .x { width: 11px; height: 11px; display: block; }
    .doc { display: flex; align-items: center; justify-content: space-between; height: 24px; margin-top: 1px;
      padding: 1px 4px 0 5px; background: #dadada; border: solid #b5b5b5; border-width: 1px 0 1px; }
    .view { flex: 1; min-height: 0; display: grid; grid-template: minmax(0, 1fr) 21px / minmax(0, 1fr) 20px;
      margin-top: 1px; border-top: 1px solid #888; border-bottom: 1px solid #858585; }
    .vbar, .hbar { display: flex; align-items: center; background: #efefef; }
    .vbar { flex-direction: column; }
    .hbar { grid-column: 1; }
    .vbar button, .hbar button { width: 20px; height: 20px; display: grid; place-items: center; flex: none; }
    .vthumb { width: 18px; height: 70px; background: #cdcdcd; }
    .hthumb { height: 20px; width: 165px; background: #cdcdcd; }
    .before { flex: 334; } .after { flex: 364; }
    .hbefore { flex: 757; } .hafter { flex: 897; }
    .side { width: 39px; padding-left: 2px; border-left: 1px solid #fdfdfd; }
    .side .tool { height: 31px; padding-left: 3px; }
    .hgrip { height: 12px; padding: 5px 0 0 4px; }
    .hgrip::before { content: ""; display: block; width: 29px; height: 2px;
      background: repeating-linear-gradient(90deg, #b9b9b9 0 2px, transparent 2px 4px); }
    .hgrip.split { height: 14px; padding-top: 6px; box-shadow: inset 0 1px #b8b8b8; }
    .dock { height: 39px; padding: 5px 0 0 4px; border-top: 1px solid #fff; }
    .dock::before { content: ""; display: block; width: 2px; height: 31px;
      background: repeating-linear-gradient(#b9b9b9 0 2px, transparent 2px 4px); }
    .status { display: grid; grid-template-columns: minmax(0, 1fr) 270px 119px 308px 346px 119px; height: 24px;
      font: 14px/26px "Noto Sans", "Open Sans", sans-serif; white-space: nowrap; }
    .status span + span { padding-left: 4px; border-left: 1px solid #d6d6d6; }
  `;

  @state() private tab = 0;

  private icon(name: string) {
    return html`<svg class="icon" width="25" height="25" viewBox="0 0 25 25" aria-hidden="true">${ICONS[name]}</svg>`;
  }

  private caret() {
    return html`<svg class="caret" width="10" height="5" viewBox="0 0 10 5" aria-hidden="true"><path d="M0 0h10L5 5z"/></svg>`;
  }

  private tools(list: Tool[]) {
    return list.map((d) => html`<button class=${classMap({ tool: true, menu: !!d.menu, on: !!d.on, off: !!d.off })}
      aria-label=${d.label} title=${d.label} ?disabled=${d.off}>${this.icon(d.icon)}${d.menu ? this.caret() : nothing}</button>`);
  }

  private group(...content: unknown[]): TemplateResult {
    return html`<div class="group" role="group"><span class="grip"></span>${content}</div>`;
  }

  private pick(cls: string, label: string, value: string) {
    return html`<div class="pick ${cls}"><select aria-label=${label}><option>${value}</option></select>${this.caret()}</div>`;
  }

  private chevron(label: string, d: string) {
    return html`<button aria-label=${label}><svg width="12" height="12" viewBox="0 0 12 12"><path d=${d} fill="none" stroke="#555" stroke-width="2"/></svg></button>`;
  }

  render() {
    const menus: [string, string, string][] = [["", "F", "ile"], ["", "E", "dit"], ["", "B", "uild"], ["Te", "r", "rain"],
      ["", "L", "ibrary"], ["", "3", "D"], ["", "C", "AD"], ["", "T", "ools"], ["", "V", "iew"], ["", "W", "indow"], ["", "H", "elp"]];
    const tabs = ["Floor Plan", "Door Schedule", "Window Schedule", "Cabinet Schedule", "Perspective Floor Overview - Camera 2"];
    return html`
      <header class="titlebar">
        <svg width="20" height="20" viewBox="0 0 20 20" aria-hidden="true">
          <defs><linearGradient id="shade" x2="1" y2="1"><stop stop-color="#3f3f3f"/><stop offset="1" stop-color="#8a8a8a"/></linearGradient></defs>
          <rect width="20" height="20" fill="url(#shade)"/>
          <path d="M3 20V6c8 0 14 5 15 14z" fill="#858585" stroke="#fff" stroke-width="1.500"/><path d="M0 3h4c9 1 14 7 16 13" fill="none" stroke="#eee"/>
        </svg>
        <h1>Chief Architect Premier X8</h1>
        <button class="winbtn" aria-label="Minimize"><svg width="12" height="12"><path d="M0 6.500h12" stroke="#888"/></svg></button>
        <button class="winbtn" aria-label="Restore"><svg width="13" height="13"><path d="M.5 3.500h9v9h-9zM3.500 3V.5h9v9H10" fill="none" stroke="#777"/></svg></button>
        <button class="winbtn" aria-label="Close"><svg width="13" height="13"><path d="M1 1l11 11M12 1L1 12" stroke="#777"/></svg></button>
      </header>
      <nav class="menubar" aria-label="Main menu">
        ${menus.map(([a, u, b]) => html`<button>${a}<u>${u}</u>${b}</button>`)}
      </nav>
      <div class="toolbar" role="toolbar" aria-label="Main">
        ${this.group(this.tools(FILE_TOOLS))}
        ${this.group(this.tools(SET_TOOLS), this.pick("set", "Layer set", "Kitchen & Bath Set"),
          this.pick("defaults", "Annotation set", "NKBA General Annotations"), this.tools(WRENCH_TOOLS))}
        ${this.group(this.tools(BROWSER_TOOLS))}
        ${this.group(this.tools(VIEW_TOOLS))}
        ${this.group(this.tools(MODE_TOOLS))}
      </div>
      <div class="toolbar build" role="toolbar" aria-label="Build">
        ${this.group(this.tools(BUILD_TOOLS))}
        ${this.group(this.tools([t("down", "Down One Floor", "x")]), html`<span class="floor">1</span>`, this.tools([t("up", "Up One Floor")]))}
        ${this.group(this.tools(CAD_TOOLS))}
      </div>
      <div class="work">
        <main class="main">
          <div class="tabs">
            ${tabs.map((name, i) => html`<div class=${classMap({ tab: true, current: i === this.tab })}>
              <button @click=${() => (this.tab = i)}>Cab-Labels: ${name}</button>
              <button class="x" aria-label="Close ${name}"><svg width="11" height="11">${closeMark}</svg></button></div>`)}
          </div>
          <div class="doc"><span>Cab-Labels: Floor Plan</span>
            <button class="x" aria-label="Close view"><svg width="11" height="11">${closeMark}</svg></button></div>
          <div class="view">
            <floor-plan></floor-plan>
            <div class="vbar">${this.chevron("Scroll up", "M1 9l5-6 5 6")}<span class="before"></span><span class="vthumb"></span><span class="after"></span>${this.chevron("Scroll down", "M1 3l5 6 5-6")}</div>
            <div class="hbar">${this.chevron("Scroll left", "M9 1L4 6l5 5")}<span class="hbefore"></span><span class="hthumb"></span><span class="hafter"></span>${this.chevron("Scroll right", "M3 1l5 5-5 5")}</div>
          </div>
        </main>
        <aside class="side" role="toolbar" aria-label="View tools">
          <div class="hgrip"></div>${this.tools(ZOOM_TOOLS)}
          <div class="hgrip split"></div>${this.tools(TOGGLE_TOOLS)}
        </aside>
      </div>
      <div class="dock"></div>
      <footer class="status">
        <span></span><span>Select Objects [Space]</span><span>Floor: 1</span><span>CAD Layer: CAD, Kitchen &amp; Bath</span>
        <span>X: 46 15/16", Y: 499 15/16", Z: 0"</span><span>1858 x 808</span>
      </footer>`;
  }
}
